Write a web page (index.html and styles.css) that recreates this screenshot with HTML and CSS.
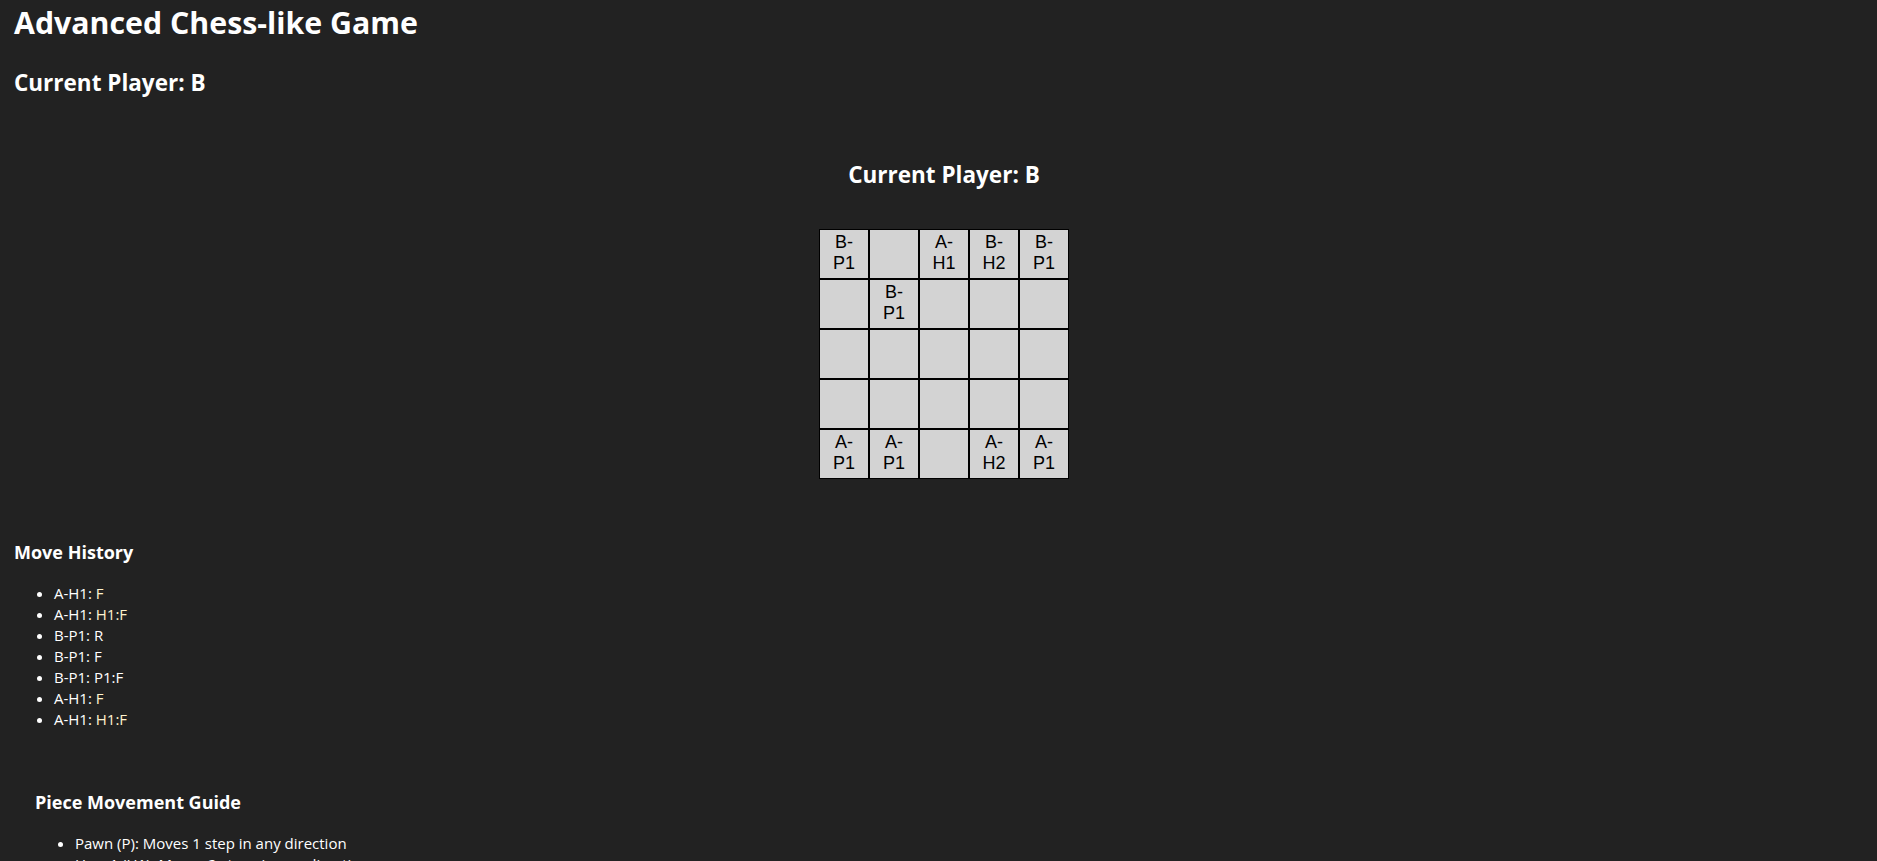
FILE: index.html
```html
<!DOCTYPE html>
<html lang="en">
<head>
<meta charset="utf-8">
<title>Advanced Chess-like Game</title>
<link rel="stylesheet" href="styles.css">
</head>
<body>
<h1 class="title">Advanced Chess-like Game</h1>
<h2 class="player">Current Player: B</h2>

<section class="game">
  <h2 class="game-player">Current Player: B</h2>
  <div class="board">
    <div class="cell">B-P1</div><div class="cell"></div><div class="cell">A-H1</div><div class="cell">B-H2</div><div class="cell">B-P1</div>
    <div class="cell"></div><div class="cell">B-P1</div><div class="cell"></div><div class="cell"></div><div class="cell"></div>
    <div class="cell"></div><div class="cell"></div><div class="cell"></div><div class="cell"></div><div class="cell"></div>
    <div class="cell"></div><div class="cell"></div><div class="cell"></div><div class="cell"></div><div class="cell"></div>
    <div class="cell">A-P1</div><div class="cell">A-P1</div><div class="cell"></div><div class="cell">A-H2</div><div class="cell">A-P1</div>
  </div>
</section>

<section class="history">
  <h3 class="section-title">Move History</h3>
  <ul class="list">
    <li>A-H1: <span class="move-a">F</span></li>
    <li>A-H1: <span class="move-a">H1:F</span></li>
    <li>B-P1: <span class="move-b">R</span></li>
    <li>B-P1: <span class="move-b">F</span></li>
    <li>B-P1: <span class="move-b">P1:F</span></li>
    <li>A-H1: <span class="move-a">F</span></li>
    <li>A-H1: <span class="move-a">H1:F</span></li>
  </ul>
</section>

<section class="guide">
  <h3 class="section-title guide-title">Piece Movement Guide</h3>
  <ul class="list">
    <li>Pawn (P): Moves 1 step in any direction</li>
    <li>Hero1 (H1): Moves 2 steps in any direction</li>
    <li>Hero2 (H2): Moves 2 steps diagonally in any direction</li>
  </ul>
</section>
</body>
</html>
```

FILE: styles.css
```css
html, body {
  background: #222222;
}

body {
  margin: 0;
  padding: 2px 0 40px 14px;
  color: #ffffff;
  font-family: "Open Sans", "Noto Sans", sans-serif;
}

.title {
  margin: 0;
  font-size: 30.3px;
  font-weight: 700;
}

.player {
  margin: 24px 0 0;
  font-size: 22.5px;
  font-weight: 700;
}

.game {
  margin-top: 61px;
  padding-right: 3px;
  display: flex;
  flex-direction: column;
  align-items: center;
}

.game-player {
  margin: 0;
  font-size: 22.5px;
  font-weight: 700;
}

.board {
  margin-top: 39px;
  display: grid;
  grid-template-columns: repeat(5, 50px);
  grid-template-rows: repeat(5, 50px);
}

.cell {
  box-sizing: border-box;
  border: 1px solid #000000;
  background: #d3d3d3;
  color: #000000;
  padding: 2px 5px 0;
  text-align: center;
  font-family: "Liberation Sans", Arial, sans-serif;
  font-size: 18px;
  line-height: normal;
  overflow: hidden;
}

.history {
  margin-top: 61px;
}

.section-title {
  margin: 0 0 19px;
  font-size: 18px;
  font-weight: 700;
}

.list {
  margin: 0;
  padding-left: 40px;
  font-size: 15px;
  line-height: 21px;
}

.move-a {
  color: #fff3cd;
}

.move-b {
  color: #ffffff;
}

.guide {
  margin-top: 60px;
  padding-left: 21px;
}
```
